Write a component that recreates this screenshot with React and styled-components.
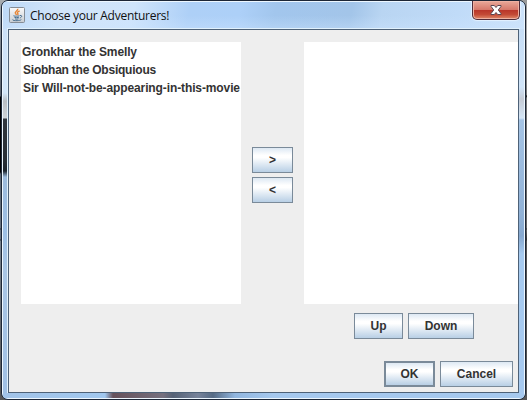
import React from "react";
import styled, { createGlobalStyle } from "styled-components";

const GlobalStyle = createGlobalStyle`
  * { box-sizing: border-box; }
  body { margin: 0; overflow: hidden; }
`;

const Desktop = styled.div`
  width: 527px;
  height: 400px;
  padding: 0 1px;
  background:
    linear-gradient(to bottom, #a9adb0 0, #8f979e 20px, #59616c 96px, #000 97px, #000 172px, #59636f 174px, #67727e 228px, #2c343c 229px, #67727e 230px, #67727e 239px, #2c343c 240px, #75808b 241px, #555 400px) left / 8px 100% no-repeat,
    linear-gradient(to bottom, #999 0, #a8a8a8 30px, #777 95px, #111 96px, #777 98px, #666 228px, #333 229px, #666 230px, #333 240px, #555 241px, #555 400px);
`;

const Frame = styled.div`
  display: flex;
  flex-direction: column;
  width: 525px;
  height: 400px;
  border: 1px solid #1c2636;
  border-radius: 7px;
  background: #a9cbef;
  overflow: hidden;
`;

const Glass = styled.div`
  flex: 1;
  display: grid;
  grid-template: 27px 1fr 5px / 5px 1fr 5px;
  min-height: 0;
  border: 1px solid #edf7ff;
  border-radius: 6px;
`;

const TitleBar = styled.header`
  grid-column: 1 / -1;
  display: flex;
  align-items: flex-start;
  padding: 0 4px 0 6px;
  background:
    linear-gradient(to bottom, rgba(255,255,255,0) 50%, rgba(205,229,255,.4)),
    linear-gradient(100deg, #bdd9f7 0, #d2e5f9 60px, #cfe4fb 130px, #aed0f7 185px, #add0f8 235px, #a2c6ed 270px, #a3c5e9 345px, #b9d5f2 375px, #c0dbf8 450px, #cce2fa 100%);
`;

const Title = styled.h1`
  flex: 1;
  margin: 5px 0 0 5px;
  font: 400 12px/17px "Open Sans", "Noto Sans", sans-serif;
  letter-spacing: -0.27px;
  color: #111;
  white-space: nowrap;
`;

const AppIcon = styled.svg`
  display: block;
  width: 16px;
  height: 16px;
  margin-top: 5px;
`;

const CloseButton = styled.button`
  display: flex;
  align-items: flex-start;
  justify-content: center;
  width: 48px;
  height: 19px;
  margin-top: -1px;
  padding: 0;
  border: 1px solid #512d3a;
  border-top: 0;
  border-radius: 0 0 5px 5px;
  box-shadow: inset 0 0 0 1px #eeb1a2, 0 0 1px 1px #e4f2ff;
  background: linear-gradient(to bottom, #e9a99a 0, #d6796b 48%, #b9362a 52%, #c34a36 75%, #e08a6a 100%);
`;

const LeftEdge = styled.div`
  background: linear-gradient(to bottom, #cce1f8 0, #d4e7f9 64px, #b9bec3 72px, #ced3d8 89px, #30363e 90px, #282e35 132px, #1d252e 142px, #9cbbdd 148px, #9dc0e5 200px, #a9c6e5 240px, #a1c1e5 363px);
`;

const RightEdge = styled.div`
  background: linear-gradient(to bottom, #c7def6 0, #d0e4f8 58px, #c5cbd5 70px, #d5e6f6 89px, #a5c4e5 91px, #91b2d7 185px, #86a8cf 207px, #a6caef 225px, #a6c9ef 363px);
`;

const BottomEdge = styled.div`
  grid-column: 1 / -1;
  background: linear-gradient(to right, #a1c3e8 0, #a1c8ef 102px, #66515b 110px, #76707e 160px, #566276 170px, #77839a 195px, #566b85 210px, #91b6df 232px, #a6c9ef 270px, #a6c9ef 100%);
`;

const Content = styled.main`
  display: flex;
  flex-direction: column;
  min-width: 0;
  border: 1px solid #4e6278;
  outline: 1px solid #e1f1fc;
  padding: 12px 0 5px 12px;
  background: #eee;
`;

const Picker = styled.section`
  display: grid;
  grid-template-columns: 220px 63px 214px;
  height: 262px;
`;

const List = styled.ul`
  margin: 0;
  padding: 1px 0 0 1px;
  list-style: none;
  background: #fff;
`;

const ListItem = styled.li`
  height: 18px;
  padding-left: ${(p) => p.$indent}px;
  font: 700 12px/18px "Liberation Sans", Arial, sans-serif;
  letter-spacing: ${(p) => p.$tracking}px;
  color: #333;
  white-space: nowrap;
`;

const TransferControls = styled.div`
  display: flex;
  flex-direction: column;
  align-items: center;
  justify-content: center;
  gap: 4px;
  padding-top: 4px;
`;

const Button = styled.button`
  width: ${(p) => p.$width}px;
  height: 26px;
  padding: 0;
  border: ${(p) => (p.$primary ? 2 : 1)}px solid #7a8a99;
  border-radius: 0;
  background: linear-gradient(to bottom, #dde8f3 0, #fff 30%, #fff 40%, #b8cfe5 100%);
  font: 700 12px/16px "Liberation Sans", Arial, sans-serif;
  color: #333;
`;

const ButtonRow = styled.div`
  display: flex;
  justify-content: flex-end;
  gap: 5px;
  margin-top: ${(p) => p.$top}px;
  padding-right: ${(p) => p.$right}px;
`;

const adventurers = [
  { name: "Gronkhar the Smelly", indent: 0, tracking: -0.13 },
  { name: "Siobhan the Obsiquious", indent: 1, tracking: -0.23 },
  { name: "Sir Will-not-be-appearing-in-this-movie", indent: 1, tracking: -0.11 },
];

function JavaIcon() {
  return (
    <AppIcon viewBox="0 0 16 16" fill="none">
      <defs>
        <linearGradient id="tile" x2="0" y2="1">
          <stop stopColor="#fafafa" />
          <stop offset="1" stopColor="#c8cdd2" />
        </linearGradient>
      </defs>
      <rect x=".5" y=".5" width="15" height="15" rx="1" fill="url(#tile)" stroke="#858d96" />
      <path d="M8.7 1.8C9.5 3.7 5.2 4.3 6.4 6.3L7.6 7.9M10.6 3.8C7.9 5 8 5.7 8.8 6.5 9.2 7 9 7.5 8.5 8" stroke="#e78331" strokeWidth="1.4" />
      <path d="M4.7 8.6C3.4 9.3 9.5 9.3 10.5 8.7M5.4 10.3Q7.6 11.1 10 10.2M6 11.9Q7.8 12.5 9.5 11.8M11 8.5C13.5 8 13.1 10.3 10.8 11M3.8 12.6C2.5 13.8 10.8 14.2 12.3 12.6" stroke="#486f90" />
    </AppIcon>
  );
}

function CloseIcon() {
  return (
    <svg width="12" height="16" viewBox="0 0 12 16">
      <path d="M1 4.5H4.3L6 6.5 7.7 4.5H11V5.4L8.3 9 11 12.6V13.5H7.7L6 11.5 4.3 13.5H1V12.6L3.7 9 1 5.4Z" fill="#fff" stroke="#594550" />
    </svg>
  );
}

export default function App() {
  return (
    <>
      <GlobalStyle />
      <Desktop>
        <Frame>
          <Glass>
            <TitleBar>
              <JavaIcon />
              <Title>Choose your Adventurers!</Title>
              <CloseButton aria-label="Close"><CloseIcon /></CloseButton>
            </TitleBar>
            <LeftEdge />
            <Content>
              <Picker>
                <List>
                  {adventurers.map(({ name, indent, tracking }) => (
                    <ListItem key={name} $indent={indent} $tracking={tracking}>{name}</ListItem>
                  ))}
                </List>
                <TransferControls>
                  <Button $width={41}>&gt;</Button>
                  <Button $width={41}>&lt;</Button>
                </TransferControls>
                <List />
              </Picker>
              <ButtonRow $top={9} $right={44}>
                <Button $width={49}>Up</Button>
                <Button $width={66}>Down</Button>
              </ButtonRow>
              <ButtonRow $top={22} $right={5}>
                <Button $width={51} $primary>OK</Button>
                <Button $width={73}>Cancel</Button>
              </ButtonRow>
            </Content>
            <RightEdge />
            <BottomEdge />
          </Glass>
        </Frame>
      </Desktop>
    </>
  );
}
